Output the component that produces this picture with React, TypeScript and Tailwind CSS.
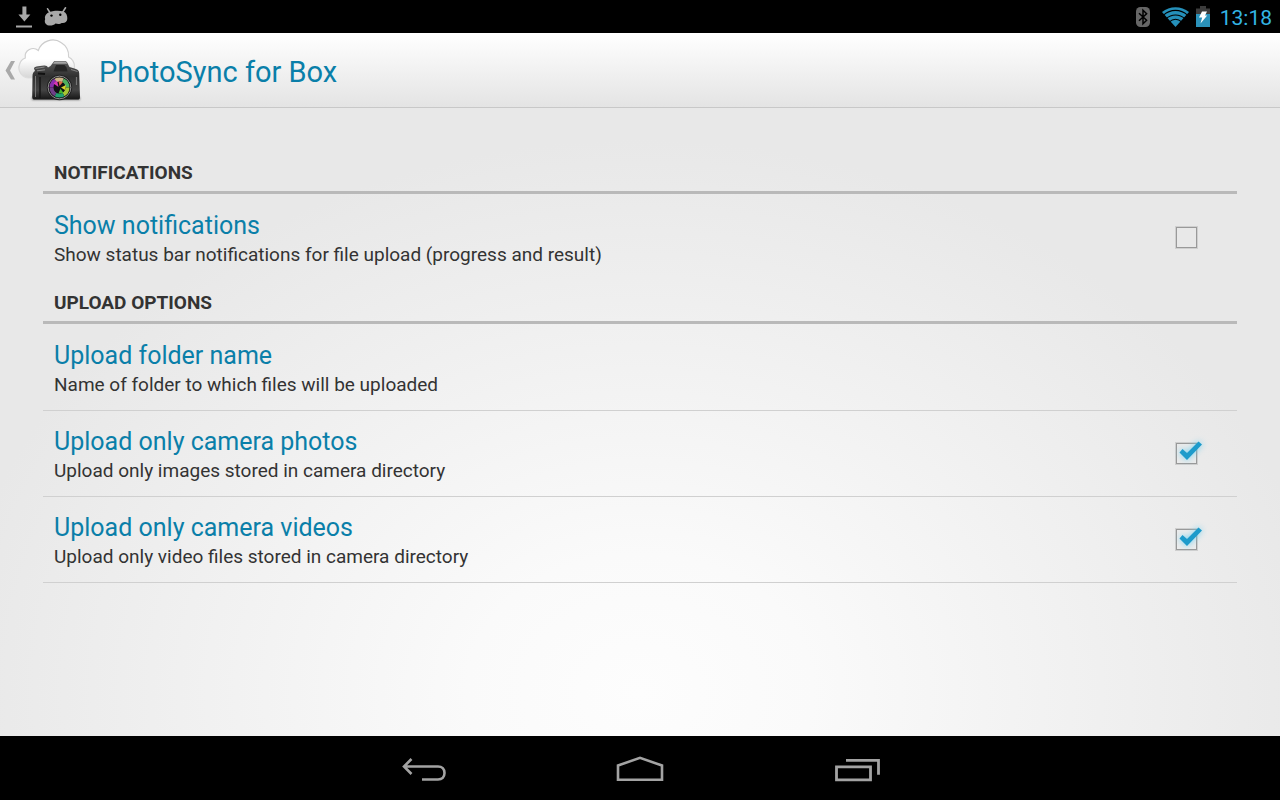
import { useState } from "react";

type Preference = {
  id: string;
  title: string;
  summary: string;
  checked?: boolean;
};

const SECTIONS: { heading: string; items: Preference[] }[] = [
  {
    heading: "NOTIFICATIONS",
    items: [
      {
        id: "show-notifications",
        title: "Show notifications",
        summary: "Show status bar notifications for file upload (progress and result)",
        checked: false,
      },
    ],
  },
  {
    heading: "UPLOAD OPTIONS",
    items: [
      {
        id: "folder-name",
        title: "Upload folder name",
        summary: "Name of folder to which files will be uploaded",
      },
      {
        id: "camera-photos",
        title: "Upload only camera photos",
        summary: "Upload only images stored in camera directory",
        checked: true,
      },
      {
        id: "camera-videos",
        title: "Upload only camera videos",
        summary: "Upload only video files stored in camera directory",
        checked: true,
      },
    ],
  },
];

function StatusBar() {
  return (
    <div className="flex h-[33px] shrink-0 items-center justify-between bg-black pl-4 pr-2">
      <div className="flex items-center gap-3">
        <svg className="h-[22px] w-4" viewBox="0 0 16 22" fill="#a8a8a8" aria-hidden="true">
          <path d="M6.4 0.500h4v8h4L8.4 15.500 2.4 8.500h4z" />
          <path d="M0 19.500h16v2H0z" />
        </svg>
        <svg className="h-5 w-6" viewBox="0 0 24 20" aria-hidden="true">
          <path
            d="M4.500 5.600C8 3.800 15 3.200 19.500 4.600 22.500 6 23.500 9 23.300 12 23 15 20.500 16.600 17.600 16 16 17.300 13.500 17 11.500 16.600 9.500 18.700 6 19 3.500 18.200.8 17 .2 14 1.200 12 .3 9.500 2 7 4.500 5.600z"
            fill="#a8a8a8"
          />
          <path d="M3.600 1.800L6.200 6M21.500.8L18.800 5" stroke="#a8a8a8" strokeWidth="1.600" strokeLinecap="round" />
          <circle cx="7.500" cy="8.600" r="1.200" fill="#000" />
          <circle cx="16.300" cy="7.800" r="1.200" fill="#000" />
        </svg>
      </div>
      <div className="flex items-center">
        <svg className="mr-3 h-5 w-[14px]" viewBox="0 0 14 20" aria-hidden="true">
          <rect width="14" height="20" rx="4.500" fill="#666" />
          <path d="M3 6.300l7.600 7L7 16.700V3.300l3.600 3.400L3 13.700" fill="none" stroke="#000" strokeWidth="1.500" />
        </svg>
        <svg className="mr-[7px] h-5 w-[27px]" viewBox="0 0 27 20" aria-hidden="true">
          <path d="M0 5C7.500-1.500 19.500-1.500 27 5L13.500 20z" fill="#2590ba" />
          <g fill="none" stroke="#000" strokeWidth="1.100">
            <path d="M1.500 8.200C8.500 1.800 18.500 1.800 25.500 8.200" />
            <path d="M4 11.800C9.500 6.800 17.500 6.800 23 11.800" />
            <path d="M7 15.200C11 11.600 16 11.600 20 15.200" />
          </g>
        </svg>
        <svg className="mr-[10px] h-[21px] w-[14px]" viewBox="0 0 14 21" aria-hidden="true">
          <path d="M4 0h6v2.500h4V8H0V2.500h4z" fill="#3c3c3c" />
          <path d="M0 8h14v13H0z" fill="#2b92ba" />
          <path d="M6 5.500h5L9 9.500h2.200L4.500 17.500l1.700-6H3z" fill="#fff" />
        </svg>
        <time className="pt-[2px] text-[21px] leading-6 text-[#33b5e5]">13:18</time>
      </div>
    </div>
  );
}

function CameraLogo() {
  return (
    <svg className="h-[66px] w-[66px]" viewBox="17 37 66 66" aria-hidden="true">
      <defs>
        <linearGradient id="cloud" x1="0" y1="0" x2="0" y2="1">
          <stop offset=".5" stopColor="#fff" />
          <stop offset="1" stopColor="#d6d6d6" />
        </linearGradient>
        <linearGradient id="cloud-edge" x1="0" y1="0" x2="0" y2="1">
          <stop offset="0" stopColor="#cacaca" />
          <stop offset=".6" stopColor="#d4d4d4" />
          <stop offset="1" stopColor="#dedede" />
        </linearGradient>
        <linearGradient id="body" x1="0" y1="0" x2="0" y2="1">
          <stop offset="0" stopColor="#5c5c5c" />
          <stop offset=".4" stopColor="#303030" />
          <stop offset=".75" stopColor="#444" />
          <stop offset="1" stopColor="#151515" />
        </linearGradient>
        <filter id="soft" x="-30%" y="-60%" width="160%" height="220%">
          <feGaussianBlur stdDeviation="1.200" />
        </filter>
        <filter id="lens-blend" x="-20%" y="-20%" width="140%" height="140%">
          <feGaussianBlur stdDeviation=".6" />
        </filter>
      </defs>
      <path
        d="M28 78C21 77 17.500 70 19.500 64.500 20.300 61.500 22.500 59 25.300 58 24 50 33 46 38.300 50.500 41.500 41 53 37 61 42.500 66 45.500 69 50.500 68.600 57 72.500 59 74.500 62 74.500 67L72 78z"
        fill="url(#cloud)"
        stroke="url(#cloud-edge)"
        strokeWidth="1.200"
      />
      <path d="M32 97h48v3H32z" fill="#777" filter="url(#soft)" />
      <path
        d="M32.500 76c0-2.500.8-4 2.500-5l-1-2.500c0-1.500 2-2 4-2.300l6-.7c2-.2 3.500.5 4 2l2.500-1.500 3-4c.5-.7 1-1 2-1h9c1.500 0 2 .5 2.700 1.500l2.300 4.500 5 1.500c3 .8 4.500 2 4.700 4.500L80 97c0 1.800-.8 2.600-2.500 2.600H35c-2 0-2.800-1-2.800-2.600z"
        fill="url(#body)"
      />
      <path d="M54 62.500c.5-.7 1-1 2-1h8.500c1 0 1.500.3 2 1l.6 1.200H53z" fill="#a5a5a5" />
      <path d="M55 67.500l1-2.500h8.500l2 2.500 1 4H53.500z" fill="#262626" />
      <path d="M35.500 68.500l9-1.500M37 70.800l8-1" stroke="#8f8f8f" strokeWidth=".9" />
      <path d="M38 73.500l7 .5" stroke="#111" strokeWidth="2" />
      <path d="M71 69.500l6.500 2" stroke="#8a8a8a" strokeWidth=".9" />
      <path d="M35.500 76v21" stroke="#777" strokeWidth="1" />
      <path d="M40 77v21" stroke="#161616" strokeWidth="1.500" />
      <path d="M76.500 77v8" stroke="#777" strokeWidth="1.200" />
      <circle cx="59.500" cy="87.500" r="12.700" fill="#222" />
      <circle cx="59.500" cy="87.500" r="11.300" fill="#0b0b0b" stroke="#b0b0b0" strokeWidth=".8" />
      <g fill="none" strokeWidth="4" filter="url(#lens-blend)">
        <path d="M51.500 87.500A8 8 0 0 1 55.500 80.600" stroke="#8a2fae" />
        <path d="M55.500 80.600A8 8 0 0 1 63 80.300" stroke="#cdb48a" />
        <path d="M63 80.300A8 8 0 0 1 67.500 87.500" stroke="#4fb060" />
        <path d="M67.500 87.500A8 8 0 0 1 63.500 94.400" stroke="#a8c636" />
        <path d="M63.500 94.400A8 8 0 0 1 55.500 94.400" stroke="#20a070" />
        <path d="M55.500 94.400A8 8 0 0 1 51.500 87.500" stroke="#704088" />
      </g>
      <circle cx="59.500" cy="87.500" r="5.500" fill="#101214" />
      <path d="M58.500 87l-5-3.500 3.500-3z" fill="#da36b4" />
      <path d="M59.500 86l-1-5 4.500 1z" fill="#df6940" />
      <path d="M61 87.500l5-2.500-1 5z" fill="#d9d72a" />
      <path d="M60.500 88.500l3 4.500-5 .5z" fill="#46b52f" />
    </svg>
  );
}

function ActionBar() {
  return (
    <header className="flex h-[75px] shrink-0 items-center border-b border-[#c8c8c8] bg-linear-to-b from-white to-[#e4e4e4]">
      <button type="button" aria-label="Navigate up" className="flex items-center pl-[5px]">
        <svg className="h-5 w-3" viewBox="0 0 12 20" fill="#a9a9a9" aria-hidden="true">
          <path d="M6 1h4L5 10.500l5 9H6L.500 10.500z" />
        </svg>
        <CameraLogo />
      </button>
      <h1 className="ml-4 pt-1 text-[29px] leading-9 text-[#0a7fa9]">PhotoSync for Box</h1>
    </header>
  );
}

const ROW =
  "flex h-[86px] w-full items-center border-t border-[#d0d0d0] pl-[11px] pr-10 text-left group-first:border-transparent";

function RowText({ title, summary }: { title: string; summary: string }) {
  return (
    <span className="flex flex-1 flex-col pt-[3px]">
      <span className="text-[25px] leading-8 text-[#0a7fa9]">{title}</span>
      <span className="text-[19px] leading-[26px] text-[#333]">{summary}</span>
    </span>
  );
}

function CheckRow({ item }: { item: Preference }) {
  const [on, setOn] = useState(Boolean(item.checked));
  return (
    <label htmlFor={item.id} className={ROW}>
      <RowText title={item.title} summary={item.summary} />
      <span className="relative size-[21px]">
        <input
          id={item.id}
          type="checkbox"
          checked={on}
          onChange={(e) => setOn(e.target.checked)}
          className="peer block size-[21px] appearance-none border border-[#999] outline outline-[#cfcfcf]"
        />
        <svg
          className="pointer-events-none absolute -top-1 left-0 hidden h-[26px] w-[30px] drop-shadow-[0_0_3px_#6fd0f0] peer-checked:block"
          viewBox="0 0 30 26"
          aria-hidden="true"
        >
          <path d="M3.500 13.500l3-3.500 4.500 4L22.500 2.500l3.500 3L11 21z" fill="#1d9bcb" />
        </svg>
      </span>
    </label>
  );
}

function NavigationBar() {
  return (
    <nav className="flex h-16 shrink-0 items-center justify-center gap-[168px] bg-black pt-1">
      <button type="button" aria-label="Back">
        <svg className="h-7 w-12" viewBox="0 0 48 28" fill="none" stroke="#a3a3a3" strokeWidth="2.600" aria-hidden="true">
          <path d="M11.500 3L4 10.500l7.500 7.500M5 10.500h33c4 0 6.500 2.500 6.500 6.500s-2.500 6.500-6.500 6.500H22" />
        </svg>
      </button>
      <button type="button" aria-label="Home">
        <svg className="h-7 w-12" viewBox="0 0 48 28" fill="none" stroke="#a3a3a3" strokeWidth="2.600" aria-hidden="true">
          <path d="M2 9.500L24 1.800 46 9.500v14.300H2z" />
        </svg>
      </button>
      <button type="button" aria-label="Recent apps">
        <svg className="h-7 w-12" viewBox="0 0 48 28" fill="none" stroke="#a3a3a3" strokeWidth="2.800" aria-hidden="true">
          <path d="M4.500 10.800h34v13h-34zM14 4.300h32.500v14.500" />
        </svg>
      </button>
    </nav>
  );
}

export default function App() {
  return (
    <div className="flex min-h-screen flex-col bg-[#e8e8e8] font-[Roboto,sans-serif]">
      <StatusBar />
      <ActionBar />
      <main className="flex-1 bg-[radial-gradient(ellipse_54%_88%_at_50%_93%,#fdfdfd,#fafafa_25%,#e8e8e8)] px-[43px] pt-[42px]">
        {SECTIONS.map((section) => (
          <section key={section.heading} className="group/section">
            <h2 className="flex h-11 items-center border-b-[3px] border-[#b9b9b9] px-[11px] pt-1 text-[19px] font-bold leading-6 text-[#333]">
              {section.heading}
            </h2>
            <ul className="border-[#d0d0d0] group-last/section:border-b">
              {section.items.map((item) => (
                <li key={item.id} className="group">
                  {item.checked === undefined ? (
                    <button type="button" className={ROW}>
                      <RowText title={item.title} summary={item.summary} />
                    </button>
                  ) : (
                    <CheckRow item={item} />
                  )}
                </li>
              ))}
            </ul>
          </section>
        ))}
      </main>
      <NavigationBar />
    </div>
  );
}
